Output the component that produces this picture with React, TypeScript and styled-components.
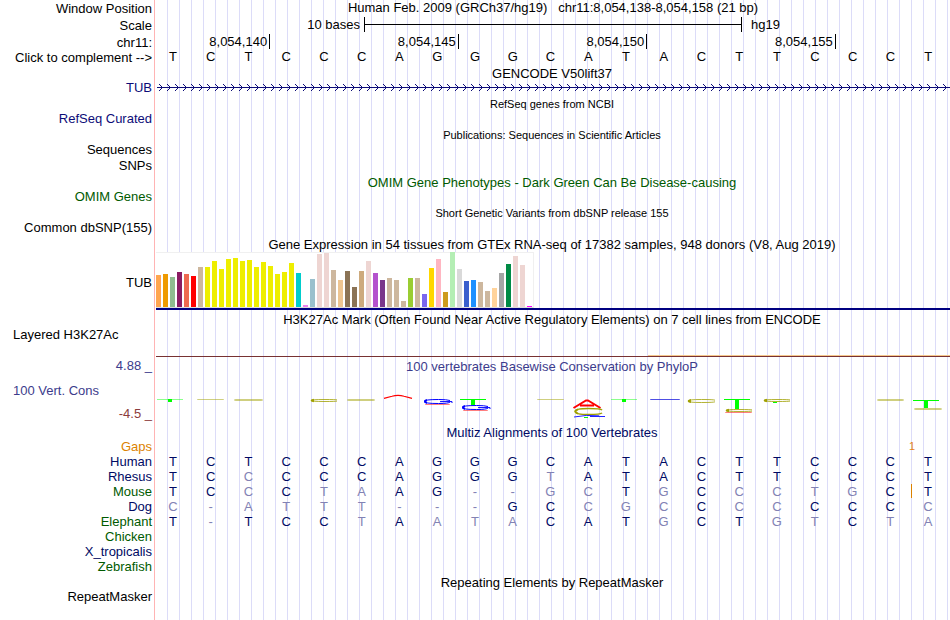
import React from "react";
import styled, { createGlobalStyle } from "styled-components";

const GlobalStyle = createGlobalStyle`
  * { box-sizing: border-box; }
  body { margin: 0; background: #fff; }
`;

const NAVY = "#0c0c78";
const DEEP_NAVY = "#000a64";
const GREEN = "#005a00";
const SLATE = "#3c3c8c";

const Browser = styled.main`
  min-height: 100vh;
  font: 13px/14px "Liberation Sans", Arial, sans-serif;
  color: #000;
  overflow: hidden;
  background:
    linear-gradient(#ffb4b4, #ffb4b4) 154px 0 / 1px 100% no-repeat,
    linear-gradient(#fff, #fff) 0 0 / 156px 100% no-repeat,
    repeating-linear-gradient(to right, #dcdcf8 0 1px, transparent 1px 12px) 155px 0 / 100% 100%;
`;

const Row = styled.div<{ $height?: number }>`
  display: grid;
  grid-template-columns: 154px minmax(0, 1fr);
  height: ${(p) => p.$height ?? 14}px;
  line-height: ${(p) => ((p.$height ?? 14) > 20 ? 14 : p.$height ?? 14)}px;
`;

const Label = styled.div<{ $color?: string; $left?: boolean; $low?: boolean }>`
  padding: ${(p) => (p.$low ? 1 : 0)}px ${(p) => (p.$left ? 0 : 2)}px 0 ${(p) => (p.$left ? 13 : 0)}px;
  text-align: ${(p) => (p.$left ? "left" : "right")};
  color: ${(p) => p.$color ?? "inherit"};
  white-space: nowrap;
`;

const StrandButton = styled.button`
  border: 0;
  padding: 0;
  background: none;
  font: inherit;
  color: inherit;
  cursor: pointer;
`;

const Heading = styled.h1`
  margin: 0;
  padding-left: 2px;
  font-size: 13px;
  font-weight: normal;
  text-align: center;
  white-space: pre;
`;

const Title = styled.h2<{ $color?: string; $small?: boolean }>`
  grid-column: 2;
  margin: 0;
  padding: 1px 2px 0;
  font-size: ${(p) => (p.$small ? 11 : 13)}px;
  font-weight: normal;
  text-align: center;
  white-space: pre;
  color: ${(p) => p.$color ?? "inherit"};
`;

const Plot = styled.div`
  display: flex;
  flex-direction: column;
  padding-left: 2px;
`;

const ScaleRow = styled.div`
  display: grid;
  grid-template-columns: 11fr 20fr 11fr;
  padding-left: 2px;
`;

const ScaleText = styled.span<{ $end?: boolean }>`
  padding: 0 ${(p) => (p.$end ? 4 : 9)}px;
  text-align: ${(p) => (p.$end ? "right" : "left")};
`;

const ScaleBar = styled.div`
  height: 15px;
  margin: 1px 0 0;
  border: solid #000;
  border-width: 0 1px;
  background: linear-gradient(#000, #000) 0 7px / 100% 1px no-repeat;
`;

const RulerRow = styled.div`
  display: grid;
  grid-template-columns: 3fr 5fr 5fr 5fr 3fr;
  padding: 0 2px;
`;

const Tick = styled.span`
  height: 15px;
  margin-right: -1px;
  padding-right: 2px;
  border-right: 1px solid #000;
  text-align: right;
`;

const Bases = styled.div`
  display: grid;
  grid-template-columns: repeat(21, minmax(0, 1fr));
  padding-right: 3px;
  line-height: 13px;
  text-align: center;
`;

const Drawing = styled.svg`
  display: block;
  width: 100%;
`;

const Expression = styled.div`
  display: flex;
  align-items: flex-end;
  gap: 2px;
  width: 378px;
  height: 56px;
  background: #fff;
  border: solid #f0f0f0;
  border-width: 1px 1px 1px 0;
  border-bottom-color: #dcdcdc;
`;

const Bar = styled.div`
  width: 5px;
  flex: none;
`;

const GeneLine = styled.div`
  height: 2px;
  background: #000080;
`;

const GeneLabel = styled(Label)`
  align-self: center;
  padding-top: 3px;
`;

const Signal = styled.div`
  margin-left: 2px;
  border-bottom: 1px solid #783232;
  display: flex;
  align-items: flex-end;
  justify-content: flex-end;
`;

const SignalTop = styled.div`
  width: 38%;
  height: 1px;
  background: #f5c88c;
`;

const ScaleLabels = styled.div`
  display: flex;
  flex-direction: column;
  justify-content: space-between;
  padding: 9px 0 3px;
`;

const Alignment = styled.table`
  width: 100%;
  table-layout: fixed;
  border-collapse: collapse;
  line-height: 15px;
`;

const Species = styled.th<{ $color: string }>`
  width: 154px;
  padding: 0 2px 0 0;
  font-weight: normal;
  text-align: right;
  color: ${(p) => p.$color};
`;

const Base = styled.td<{ $faded?: boolean }>`
  position: relative;
  height: 15px;
  padding: 0;
  text-align: center;
  color: ${(p) => (p.$faded ? "#8282b4" : DEEP_NAVY)};
`;

const EdgeCell = styled.td`
  width: 3px;
  padding: 0;
`;

const GapCount = styled.td`
  padding: 0;
  font-size: 11px;
  color: #e68214;
`;

const Insertion = styled.span`
  position: absolute;
  left: 2px;
  top: 0;
  width: 1px;
  height: 14px;
  background: #dc8200;
`;

const HUMAN = "TCTCCCAGGGCATACTTCCCT";

const species = [
  { name: "Human", color: DEEP_NAVY, seq: HUMAN },
  { name: "Rhesus", color: DEEP_NAVY, seq: "TCCCCCAGGGTATACTTCCCT" },
  { name: "Mouse", color: GREEN, seq: "TCCCTAAG--GCTGCCCTGCT", insertion: 20 },
  { name: "Dog", color: DEEP_NAVY, seq: "C-ATTT---GCCGCCCCCCCC" },
  { name: "Elephant", color: GREEN, seq: "T-TCCTAATACATGCTGTCTA" },
  { name: "Chicken", color: GREEN, seq: "" },
  { name: "X_tropicalis", color: DEEP_NAVY, seq: "" },
  { name: "Zebrafish", color: GREEN, seq: "" },
];

const tissues: [string, number][] = [
  ["#ffa54f", 32], ["#ee9a00", 33], ["#8fbc8f", 30], ["#8b1c62", 35], ["#ee6a50", 33],
  ["#ff0000", 31], ["#cdb79e", 40], ["#eeee00", 40], ["#eeee00", 46], ["#eeee00", 38],
  ["#eeee00", 48], ["#eeee00", 49], ["#eeee00", 46], ["#eeee00", 47], ["#eeee00", 40],
  ["#eeee00", 45], ["#eeee00", 41], ["#eeee00", 33], ["#eeee00", 35], ["#eeee00", 44],
  ["#00cdcd", 34], ["#ee82ee", 2], ["#9ac0cd", 28], ["#eed5d2", 53], ["#eed5d2", 54],
  ["#cdb79e", 37], ["#eec591", 27], ["#8b7355", 36], ["#8b7355", 20], ["#cdaa7d", 36],
  ["#eed5d2", 46], ["#b452cd", 34], ["#7a378b", 27], ["#cdb79e", 29], ["#cdb79e", 27],
  ["#cdb79e", 6], ["#9acd32", 29], ["#cdb79e", 29], ["#7a67ee", 13], ["#ffd700", 39],
  ["#ffb6c1", 48], ["#cd9b1d", 15], ["#b4eeb4", 55], ["#d9d9d9", 38], ["#3a5fcd", 26],
  ["#1e90ff", 27], ["#cdb79e", 25], ["#cdb79e", 16], ["#ffd39b", 19], ["#a6a6a6", 34],
  ["#008b45", 43], ["#eed5d2", 51], ["#eed5d2", 42], ["#ff00ff", 1],
];

const OLIVE = "#a0a000";

function Ring({ x, y, w, h, color = OLIVE }: { x: number; y: number; w: number; h: number; color?: string }) {
  return (
    <g fill="none" stroke={color}>
      <path
        d={`M${x + w - 1} ${y + h * 0.3}Q${x + w - 2} ${y + 0.5} ${x + w / 2} ${y + 0.5}Q${x + 1} ${y + 0.5} ${x + 1} ${y + h / 2}Q${x + 1} ${y + h - 0.5} ${x + w / 2} ${y + h - 0.5}Q${x + w - 2} ${y + h - 0.5} ${x + w - 1} ${y + h * 0.7}`}
        strokeWidth={h > 5 ? 1.4 : 0.8}
      />
      <path d={`M${x + 4} ${y + h * 0.2}Q${x - 1} ${y + h / 2} ${x + 4} ${y + h * 0.8}`} strokeWidth="1.8" />
    </g>
  );
}

function Hook({ x, y, w, h }: { x: number; y: number; w: number; h: number }) {
  return (
    <g fill="none" stroke="#0000ff">
      <path
        d={`M${x + w - 4} ${y + 1.5}Q${x + w - 7} ${y + 0.5} ${x + w / 2} ${y + 0.5}Q${x + 1} ${y + 0.5} ${x + 1} ${y + h / 2}Q${x + 1} ${y + h - 0.5} ${x + w / 2} ${y + h - 0.5}Q${x + w - 5} ${y + h - 0.5} ${x + w - 4} ${y + h * 0.6}M${x + w * 0.55} ${y + h * 0.52}H${x + w - 2}V${y + h - 1}`}
        strokeWidth="1"
      />
      <path d={`M${x + 4} ${y + 1}Q${x} ${y + h / 2} ${x + 4} ${y + h - 1}`} strokeWidth="2" />
    </g>
  );
}

function Stem({ x, y, h, soft }: { x: number; y: number; h: number; soft?: boolean }) {
  return (
    <g fill="#00ff00">
      <rect x={x} y={y} width="26" height="1" opacity={soft ? 0.45 : 1} />
      <rect x={x + 11} y={y} width="4" height={h} />
    </g>
  );
}

function Dash({ x, y, w, h = 1, color, soft }: { x: number; y: number; w: number; h?: number; color: string; soft?: boolean }) {
  return <rect x={x} y={y} width={w} height={h} rx={h} fill={color} opacity={soft ? 0.5 : 0.8} />;
}

function ConservationLogo() {
  return (
    <Drawing viewBox="0 0 794 49" height="49" preserveAspectRatio="none" role="img" aria-label="PhyloP conservation logo">
      <Stem x={1} y={24} h={3} soft />
      <Dash x={41} y={24} w={27} color={OLIVE} soft />
      <Dash x={78} y={24} w={29} h={2} color={OLIVE} soft />
      <Ring x={154} y={24} w={28} h={3} />
      <Dash x={191} y={24} w={28} h={2} color={OLIVE} soft />
      <path d="M228 23.4L236 21.3Q242 19.4 248 21.3L256 23.4" fill="none" stroke="#f00" strokeWidth="1.1" />
      <Hook x={267} y={24} w={31} h={5} />
      <Dash x={269} y={29} w={25} color="#f00" soft />
      <Stem x={304} y={24} h={6} />
      <Hook x={305} y={30} w={31} h={5} />
      <Dash x={307} y={35} w={25} color="#f00" soft />
      <Dash x={381} y={24} w={27} color={OLIVE} soft />
      <path d="M417.500 33L430 25.500H432L444.500 33M424 30.600H438" fill="none" stroke="#f00" strokeWidth="2" />
      <Ring x={418} y={33} w={29} h={7} />
      <path d="M418 42Q430 39.5 443 40.8M434 41.5H449" fill="none" stroke="#22f" />
      <rect x="428" y="42" width="4" height="1" fill="#0f0" />
      <Stem x={455} y={24} h={3} soft />
      <Dash x={494} y={24} w={30} color="#2222dd" />
      <Ring x={531} y={24} w={29} h={4} />
      <Stem x={568} y={24} h={10} />
      <Ring x={569} y={34} w={28} h={3} />
      <Dash x={569} y={37} w={27} color="#f00" soft />
      <Ring x={607} y={24} w={28} h={3} />
      <rect x="617" y="27" width="4" height="1" fill="#0f0" />
      <Dash x={721} y={24} w={27} h={2} color={OLIVE} soft />
      <Stem x={757} y={25} h={8} />
      <Dash x={758} y={33} w={28} h={2} color={OLIVE} soft />
    </Drawing>
  );
}

function GeneArrows() {
  return (
    <Drawing height="14" role="img" aria-label="TUB intron, forward strand">
      <defs>
        <pattern id="chevrons" width="8" height="14" patternUnits="userSpaceOnUse">
          <path d="M3 3L6.500 6.500L3 10" fill="none" stroke={NAVY} />
        </pattern>
      </defs>
      <rect x="1" y="6" width="100%" height="1" fill={NAVY} />
      <rect width="100%" height="14" fill="url(#chevrons)" />
    </Drawing>
  );
}

interface TrackProps {
  label: string;
  title: string;
  color?: string;
  labelColor?: string;
  small?: boolean;
  titleHeight?: number;
}

function Track({ label, title, color, labelColor = color, small, titleHeight = 17 }: TrackProps) {
  return (
    <section>
      <Row $height={titleHeight}>
        <Title $color={color} $small={small}>{title}</Title>
      </Row>
      <Row>
        <Label $color={labelColor}>{label}</Label>
      </Row>
    </section>
  );
}

export default function App() {
  return (
    <Browser>
      <GlobalStyle />
      <Row $height={16}>
        <Label $low>Window Position</Label>
        <Heading>{"Human Feb. 2009 (GRCh37/hg19)   chr11:8,054,138-8,054,158 (21 bp)"}</Heading>
      </Row>
      <Row $height={18}>
        <Label $low>Scale</Label>
        <ScaleRow>
          <ScaleText $end>10 bases</ScaleText>
          <ScaleBar />
          <ScaleText>hg19</ScaleText>
        </ScaleRow>
      </Row>
      <Row $height={16}>
        <Label $low>chr11:</Label>
        <RulerRow>
          {["8,054,140", "8,054,145", "8,054,150", "8,054,155"].map((pos) => (
            <Tick key={pos}>{pos}</Tick>
          ))}
        </RulerRow>
      </Row>
      <Row $height={15}>
        <Label>
          <StrandButton type="button">{"Click to complement -->"}</StrandButton>
        </Label>
        <Bases>
          {HUMAN.split("").map((base, i) => (
            <span key={i}>{base}</span>
          ))}
        </Bases>
      </Row>
      <Row $height={16}>
        <Title>GENCODE V50lift37</Title>
      </Row>
      <Row>
        <Label $color={NAVY}>TUB</Label>
        <Plot>
          <GeneArrows />
        </Plot>
      </Row>
      <Track label="RefSeq Curated" title="RefSeq genes from NCBI" labelColor={NAVY} small />
      <Track label="Sequences" title="Publications: Sequences in Scientific Articles" small />
      <Row $height={16}>
        <Label $low>SNPs</Label>
      </Row>
      <Track label="OMIM Genes" title="OMIM Gene Phenotypes - Dark Green Can Be Disease-causing" color={GREEN} />
      <Track label="Common dbSNP(155)" title="Short Genetic Variants from dbSNP release 155" small />
      <Row $height={17}>
        <Title>Gene Expression in 54 tissues from GTEx RNA-seq of 17382 samples, 948 donors (V8, Aug 2019)</Title>
      </Row>
      <Row $height={58}>
        <GeneLabel>TUB</GeneLabel>
        <Plot>
          <Expression>
            {tissues.map(([color, level], i) => (
              <Bar key={i} style={{ height: level, background: color }} />
            ))}
          </Expression>
          <GeneLine />
        </Plot>
      </Row>
      <Row $height={18}>
        <Title>H3K27Ac Mark (Often Found Near Active Regulatory Elements) on 7 cell lines from ENCODE</Title>
      </Row>
      <Row $height={29}>
        <Label $left>Layered H3K27Ac</Label>
        <Signal>
          <SignalTop />
        </Signal>
      </Row>
      <Row $height={18}>
        <Label $color={SLATE}>4.88 _</Label>
        <Title $color={SLATE}>100 vertebrates Basewise Conservation by PhyloP</Title>
      </Row>
      <Row $height={49}>
        <ScaleLabels>
          <Label $left $color={SLATE}>100 Vert. Cons</Label>
          <Label $color="#8c3c3c">-4.5 _</Label>
        </ScaleLabels>
        <Plot>
          <ConservationLogo />
        </Plot>
      </Row>
      <Row $height={15}>
        <Title $color={DEEP_NAVY}>Multiz Alignments of 100 Vertebrates</Title>
      </Row>
      <Alignment>
        <tbody>
          <tr>
            <Species scope="row" $color="#dc8200">Gaps</Species>
            <Base colSpan={20} />
            <GapCount>1</GapCount>
            <EdgeCell />
          </tr>
          {species.map(({ name, color, seq, insertion }) => (
            <tr key={name}>
              <Species scope="row" $color={color}>{name}</Species>
              {HUMAN.split("").map((ref, i) => (
                <Base key={i} $faded={seq[i] !== ref}>
                  {insertion === i && <Insertion />}
                  {seq[i]}
                </Base>
              ))}
              <EdgeCell />
            </tr>
          ))}
        </tbody>
      </Alignment>
      <Track label="RepeatMasker" title="Repeating Elements by RepeatMasker" titleHeight={16} />
    </Browser>
  );
}
